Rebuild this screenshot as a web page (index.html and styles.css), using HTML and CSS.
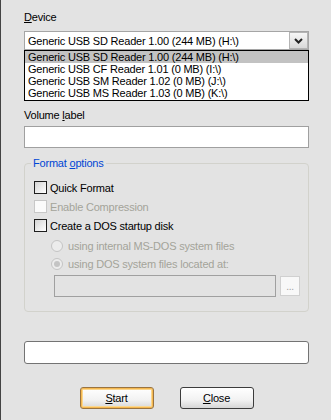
FILE: index.html
```html
<!DOCTYPE html>
<html>
  <head>
    <title>Format</title>
    <link rel="stylesheet" href="styles.css">
  </head>
  <body>
    <div class="window">
      <div class="label"><u>D</u>evice</div>
      <div class="combo">
        <span class="combo-text">Generic USB SD Reader 1.00 (244 MB) (H:\)</span>
        <span class="combo-btn">
          <svg width="9" height="6" viewBox="0 0 9 6"><path d="M1 1 L4.5 4.5 L8 1" fill="none" stroke="#222" stroke-width="2"/></svg>
        </span>
      </div>
      <ul class="combo-list">
        <li class="selected">Generic USB SD Reader 1.00 (244 MB) (H:\)</li>
        <li>Generic USB CF Reader 1.01 (0 MB) (I:\)</li>
        <li>Generic USB SM Reader 1.02 (0 MB) (J:\)</li>
        <li>Generic USB MS Reader 1.03 (0 MB) (K:\)</li>
      </ul>
      <div class="label volume">Volume <u>l</u>abel</div>
      <div class="textbox"></div>
      <fieldset class="group">
        <legend>Format <u>o</u>ptions</legend>
        <div class="group-body">
          <div class="check-row"><span class="check"></span>Quick Format</div>
          <div class="check-row disabled"><span class="check"></span>Enable Compression</div>
          <div class="check-row"><span class="check"></span>Create a DOS startup disk</div>
          <div class="radio-row disabled first"><span class="radio"></span>using internal MS-DOS system files</div>
          <div class="radio-row disabled"><span class="radio checked"></span>using DOS system files located at:</div>
          <div class="path-row">
            <span class="path-box"></span>
            <span class="browse">...</span>
          </div>
        </div>
      </fieldset>
      <div class="status"></div>
      <div class="buttons">
        <span class="btn default"><u>S</u>tart</span>
        <span class="btn"><u>C</u>lose</span>
      </div>
    </div>
  </body>
</html>
```

FILE: styles.css
```css
body {
  margin: 0;
  background-color: #e3e3e3;
  font-family: "Liberation Sans", Arial, sans-serif;
  font-size: 11px;
  letter-spacing: -0.2px;
  color: #000;
}

.window {
  height: 420px;
  box-sizing: border-box;
  border-left: 1px solid #444;
  padding: 11px 22px 0 23px;
  display: flex;
  flex-direction: column;
}

.label {
  line-height: 13px;
}

.label.volume {
  margin-top: 8px;
}

.combo {
  margin-top: 7px;
  height: 19px;
  box-sizing: border-box;
  border: 1px solid #a5a5a5;
  background-color: #fff;
  display: flex;
  align-items: center;
}

.combo-text {
  flex: 1;
  padding-left: 3px;
}

.combo-btn {
  width: 19px;
  height: 17px;
  box-sizing: border-box;
  border: 1px solid #b4b4b4;
  background: linear-gradient(#f6f6f6, #d9d9d9);
  display: flex;
  align-items: center;
  justify-content: center;
}

.combo-list {
  margin: 0;
  padding: 0 0 1px;
  list-style: none;
  border: 1px solid #000;
  background-color: #fff;
}

.combo-list li {
  height: 12px;
  line-height: 12px;
  padding-left: 3px;
}

.combo-list li.selected {
  background-color: #c2c2c2;
}

.textbox {
  margin-top: 4px;
  height: 22px;
  box-sizing: border-box;
  border: 1px solid #a0a0a0;
  background-color: #fff;
}

.group {
  margin: 9px 0 0;
  padding: 0;
  border: 1px solid #d2d2cc;
  border-radius: 4px;
}

.group legend {
  margin-left: 6px;
  padding: 0 2px;
  line-height: 13px;
  color: #0046d5;
}

.group-body {
  padding: 8px 0 14px 9px;
}

.check-row {
  height: 19px;
  display: flex;
  align-items: center;
}

.check {
  width: 13px;
  height: 13px;
  box-sizing: border-box;
  border: 1px solid #1e1e1e;
  background: linear-gradient(135deg, #d4d4d4, #fff);
  margin-right: 3px;
}

.disabled {
  color: #a4a49a;
}

.check-row.disabled .check {
  border-color: #c8c8c8;
  background: #fbfbfb;
}

.radio-row {
  height: 18px;
  display: flex;
  align-items: center;
  padding-left: 17px;
}

.radio-row.first {
  margin-top: 2px;
}

.radio {
  width: 12px;
  height: 12px;
  box-sizing: border-box;
  border: 1px solid #c4c4c4;
  border-radius: 50%;
  background-color: #ececec;
  margin-right: 5px;
  display: flex;
  align-items: center;
  justify-content: center;
}

.radio.checked::after {
  content: "";
  width: 6px;
  height: 6px;
  border-radius: 50%;
  background-color: #c4c4c4;
}

.path-row {
  margin-top: 2px;
  padding-left: 20px;
  display: flex;
  align-items: center;
}

.path-box {
  width: 222px;
  height: 22px;
  box-sizing: border-box;
  border: 1px solid #a0a0a0;
}

.browse {
  margin-left: 4px;
  width: 20px;
  height: 20px;
  box-sizing: border-box;
  border: 1px solid #d0d0d0;
  background-color: #f8f8f8;
  color: #a0a0a0;
  text-align: center;
  line-height: 20px;
  font-size: 10px;
}

.status {
  margin-top: 29px;
  height: 23px;
  box-sizing: border-box;
  border: 1px solid #737373;
  border-radius: 3px;
  background-color: #fff;
}

.buttons {
  margin-top: 23px;
  display: flex;
  justify-content: center;
  gap: 26px;
}

.btn {
  width: 74px;
  height: 22px;
  box-sizing: border-box;
  border: 1px solid #3c3c3c;
  border-radius: 3px;
  background: linear-gradient(#ffffff, #f2f2f2 60%, #d6d6d6);
  text-align: center;
  line-height: 20px;
}

.btn.default {
  border-color: #9a7440;
  box-shadow: inset 0 0 0 1px #f5b850, inset 0 0 0 2px #fbd78f;
}
```
